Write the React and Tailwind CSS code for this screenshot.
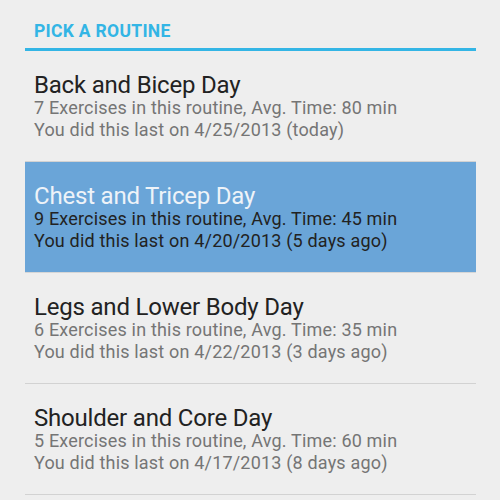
import React from 'react';

const routines = [
  { name: 'Back and Bicep Day', count: 7, time: 80, last: '4/25/2013', ago: 'today' },
  { name: 'Chest and Tricep Day', count: 9, time: 45, last: '4/20/2013', ago: '5 days ago', selected: true },
  { name: 'Legs and Lower Body Day', count: 6, time: 35, last: '4/22/2013', ago: '3 days ago' },
  { name: 'Shoulder and Core Day', count: 5, time: 60, last: '4/17/2013', ago: '8 days ago' },
];

function RoutineRow({ routine }) {
  const sel = routine.selected;
  const sub = sel ? 'text-[#222222]' : 'text-[#757575]';
  return (
    <div
      className={`h-[111px] pt-[22px] pl-[9px] border-b ${
        sel ? 'bg-[#6aa5d8] border-[#d6d6d6]' : 'border-[#d2d2d2]'
      }`}
    >
      <div className={`text-[24px] leading-[24px] tracking-[-0.2px] ${sel ? 'text-[#eef3f8]' : 'text-[#222222]'}`}>
        {routine.name}
      </div>
      <div className={`text-[18px] leading-[22px] tracking-[0.18px] ${sub}`}>
        {routine.count} Exercises in this routine, Avg. Time: {routine.time} min
      </div>
      <div className={`text-[18px] leading-[22px] tracking-[0.18px] ${sub}`}>
        You did this last on {routine.last} ({routine.ago})
      </div>
    </div>
  );
}

export default function App() {
  return (
    <div className="w-[500px] h-[500px] overflow-hidden bg-[#eeeeee]" style={{ fontFamily: 'Roboto, sans-serif' }}>
      <div className="ml-[25px] w-[451px]">
        <div className="h-[51px] border-b-[3px] border-[#33b5e5] flex items-end pb-[8px] pl-[9px]">
          <span className="text-[17.5px] leading-none font-bold tracking-[0.3px] text-[#33b5e5]">PICK A ROUTINE</span>
        </div>
        {routines.map(r => (
          <RoutineRow key={r.name} routine={r} />
        ))}
      </div>
    </div>
  );
}
